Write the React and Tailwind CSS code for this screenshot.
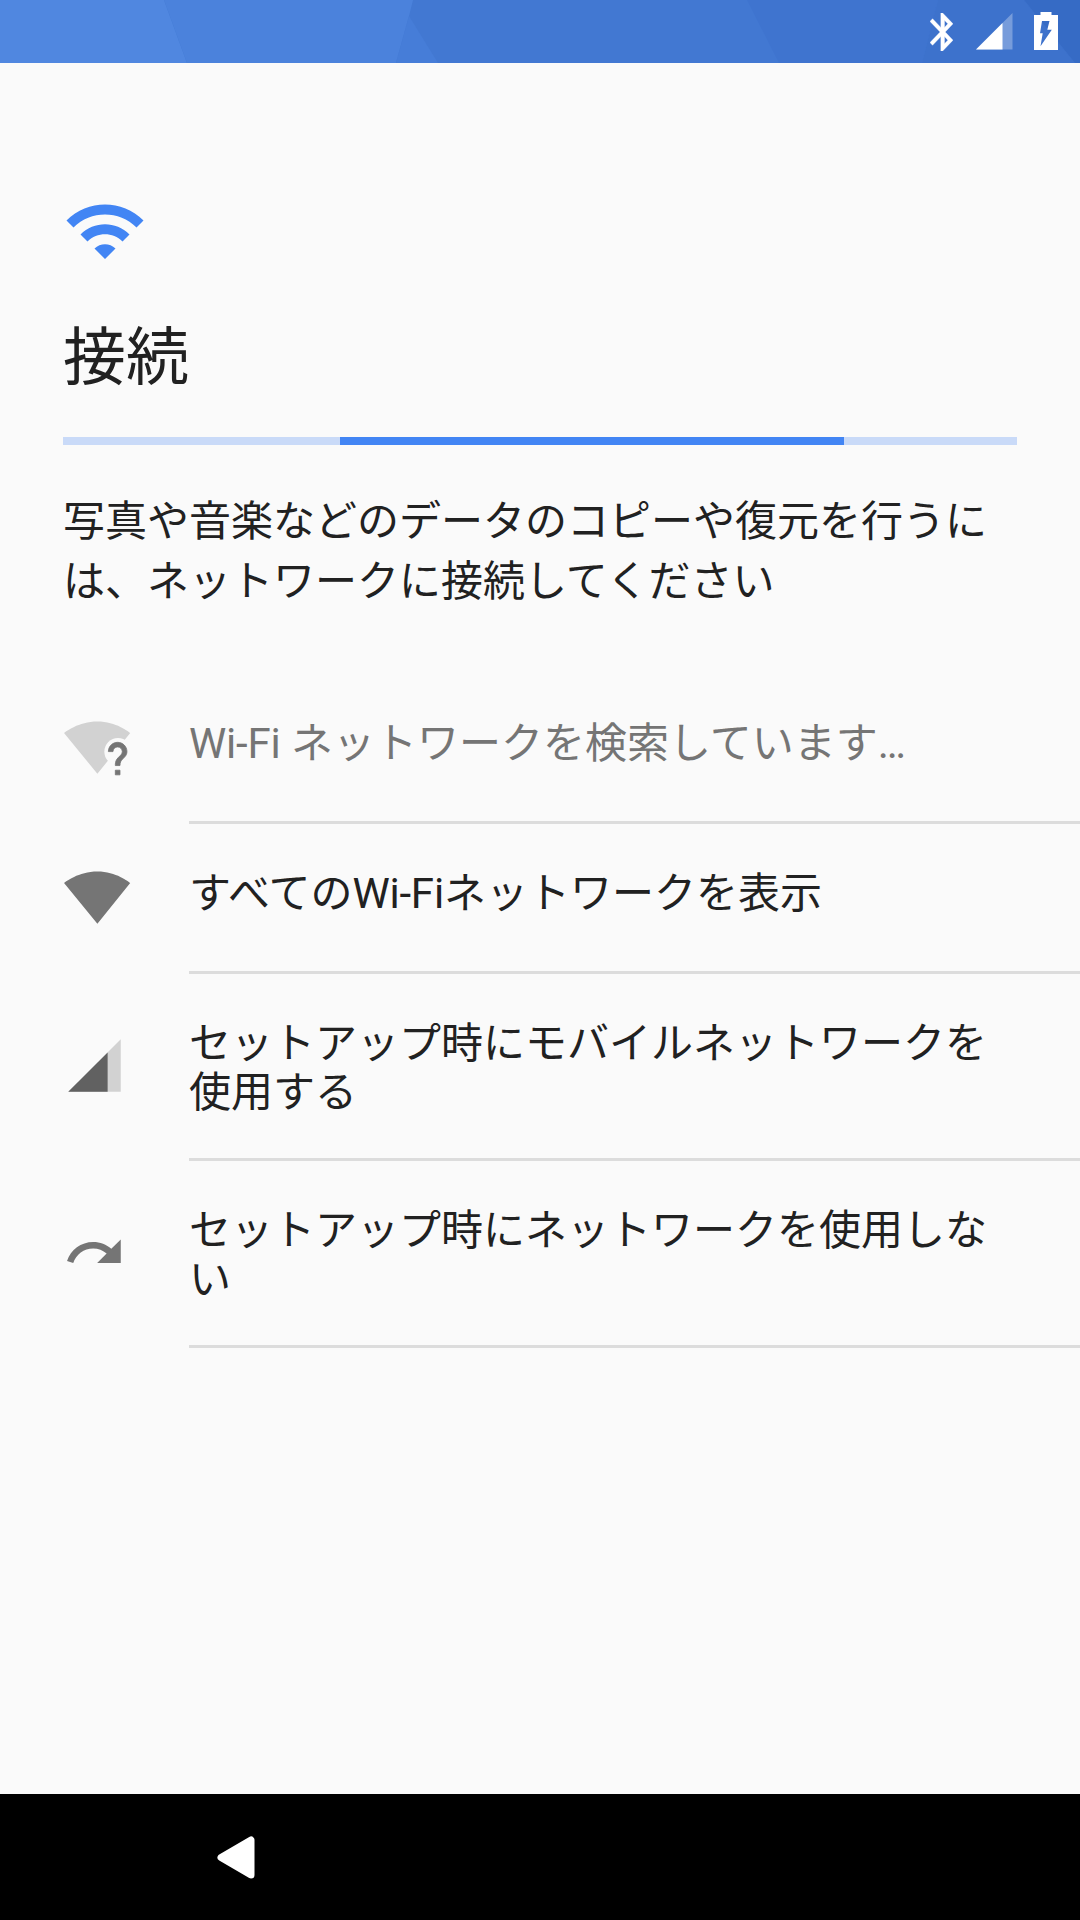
import React from 'react';

const WIFI_FULL = 'M13.1,22L25.6,6.5C25.1,6.1,20.3,2.1,13.1,2.1S0.9,6.1,0.4,6.5L13.1,22z';

function StatusBar() {
  return (
    <header className="relative h-[63px] w-full bg-[#4278d2]">
      {/* Faceted wallpaper */}
      <svg className="absolute inset-0" width="1080" height="63" viewBox="0 0 1080 63">
        <path d="M0 0H164L187 63H0z" fill="#5087e0" />
        <path d="M164 0H413L409 16L396 63H187z" fill="#4b82dc" />
        <path d="M409 16L438 63H396z" fill="#467dd8" />
        <path d="M747 0H938L922 63H779z" fill="#3f74cf" />
        <path d="M938 0H1024L1075 63H922z" fill="#3d72cc" />
        <path d="M1024 0H1080V63H1075z" fill="#366bc5" />
      </svg>
      <div className="relative flex h-full items-center justify-end">
        <svg
          width="23"
          height="38"
          viewBox="5 2 12.71 20"
          preserveAspectRatio="none"
          className="mr-[23px]"
        >
          <path
            fill="#fff"
            stroke="#fff"
            strokeWidth="0.2"
            d="M17.71 7.71L12 2h-1v7.59L6.41 5 5 6.41 10.59 12 5 17.59 6.41 19 11 14.41V22h1l5.71-5.71-4.3-4.29 4.3-4.29zM13 5.83l1.88 1.88L13 9.59V5.83zm1.88 10.46L13 18.17v-3.76l1.88 1.88z"
          />
        </svg>
        <svg width="37" height="37" viewBox="0 0 37 37" className="mr-[21px] mb-px">
          <path d="M0 36.5L36.5 0V36.5z" fill="#fff" fillOpacity="0.3" />
          <path d="M0 36.5L26.5 10V36.5z" fill="#fff" />
        </svg>
        <svg width="24" height="38" viewBox="0 0 24 38" className="mr-[22px] mb-px">
          <path
            fillRule="evenodd"
            fill="#fff"
            d="M6.5 0H17.5V3H24V38H0V3H6.5zM8 9H15.5L13.3 17.8H17.8L6.5 34.3L8.7 21.3H6z"
          />
        </svg>
      </div>
    </header>
  );
}

function WifiSearchIcon() {
  return (
    <svg width="68.25" height="63" viewBox="0 0 26 24">
      <path d={WIFI_FULL} fill="#d2d2d2" />
      <circle cx="20.95" cy="13.6" r="5.2" fill="#fafafa" />
      <path
        transform="translate(10.2 5.6) scale(0.885)"
        fill="#757575"
        stroke="#757575"
        strokeWidth="0.35"
        d="M15.07 11.25l-.9.92C13.45 12.9 13 13.5 13 15h-2v-.5c0-1.1.45-2.1 1.17-2.83l1.24-1.26c.37-.36.59-.86.59-1.41 0-1.1-.9-2-2-2s-2 .9-2 2H8c0-2.21 1.79-4 4-4s4 1.79 4 4c0 .88-.36 1.68-.93 2.25zM13 19h-2v-2h2v2z"
      />
    </svg>
  );
}

function WifiIcon() {
  return (
    <svg width="68.25" height="63" viewBox="0 0 26 24">
      <path d={WIFI_FULL} fill="#757575" />
    </svg>
  );
}

function CellIcon() {
  return (
    <svg width="63" height="63" viewBox="0 0 24 24">
      <path d="M2 22H22V2z" fill="#d2d2d2" />
      <path d="M2 22H17V7z" fill="#616161" />
    </svg>
  );
}

function SkipIcon() {
  return (
    <svg width="63" height="63" viewBox="0 0 24 24">
      <path
        fill="#757575"
        d="M18.4 10.6C16.55 8.99 14.15 8 11.5 8c-4.65 0-8.58 3.03-9.96 7.22L3.9 16c1.05-3.19 4.05-5.5 7.6-5.5 1.95 0 3.73.72 5.12 1.88L13 16h9V7l-3.6 3.6z"
      />
    </svg>
  );
}

const WiFi = () => <span className="tracking-[-0.2px]">Wi-Fi</span>;

const options = [
  { id: 'search', icon: WifiSearchIcon, label: <><WiFi /> ネットワークを検索しています…</>, muted: true },
  { id: 'all', icon: WifiIcon, label: <>すべての<WiFi />ネットワークを表示</> },
  { id: 'mobile', icon: CellIcon, label: <>セットアップ時にモバイルネットワークを<br />使用する</>, tall: true },
  { id: 'skip', icon: SkipIcon, label: <>セットアップ時にネットワークを使用しな<br />い</>, tall: true },
];

function OptionRow({ option }) {
  const Icon = option.icon;

  return (
    <li className={`flex pl-[63px] ${option.tall ? 'h-[187px]' : 'h-[150px]'}`}>
      <div className={`flex w-[126px] shrink-0 items-center ${option.tall ? 'pb-[5px]' : 'pb-[4px]'}`}>
        <Icon />
      </div>
      <div
        className={`flex-1 border-b-[3px] border-[#dcdcdc] pt-[45px] text-[42px] leading-[49px] whitespace-nowrap ${
          option.muted ? 'text-[#757575]' : 'text-[#212121]'
        }`}
      >
        {option.label}
      </div>
    </li>
  );
}

export default function App() {
  return (
    <div className="flex h-[1920px] w-[1080px] flex-col overflow-hidden bg-[#fafafa] font-[Roboto,'Noto_Sans_CJK_JP',sans-serif] text-[#212121]">
      <StatusBar />

      <main className="flex-1">
        <div className="px-[63px] pt-[126px]">
          <svg width="84" height="84" viewBox="0 0 24 24">
            <path
              fill="#4285f4"
              d="M1 9l2 2c4.97-4.97 13.03-4.97 18 0l2-2C16.93 2.93 7.08 2.93 1 9zm8 8l3 3 3-3c-1.65-1.66-4.34-1.66-6 0zm-4-4l2 2c2.76-2.76 7.24-2.76 10 0l2-2C15.14 9.14 8.87 9.14 5 13z"
            />
          </svg>
          <h1 className="mt-[39px] h-[125px] text-[63px] leading-[92px]">接続</h1>

          {/* Indeterminate progress */}
          <div className="flex h-[8px] bg-[#c9daf8]">
            <div className="ml-[277px] w-[504px] bg-[#4285f4]" />
          </div>

          <p className="mt-[47px] h-[182px] text-[42px] leading-[60px] whitespace-nowrap">
            写真や音楽などのデータのコピーや復元を行うに
            <br />
            は、ネットワークに接続してください
          </p>
        </div>

        <ul>
          {options.map((option) => (
            <OptionRow key={option.id} option={option} />
          ))}
        </ul>
      </main>

      {/* Navigation bar */}
      <nav className="flex h-[126px] items-center bg-black pl-[217px]">
        <button aria-label="戻る">
          <svg width="38" height="43" viewBox="0 0 38 43">
            <path
              d="M4 21.5L34 4V39z"
              fill="#fff"
              stroke="#fff"
              strokeWidth="7"
              strokeLinejoin="round"
            />
          </svg>
        </button>
      </nav>
    </div>
  );
}
